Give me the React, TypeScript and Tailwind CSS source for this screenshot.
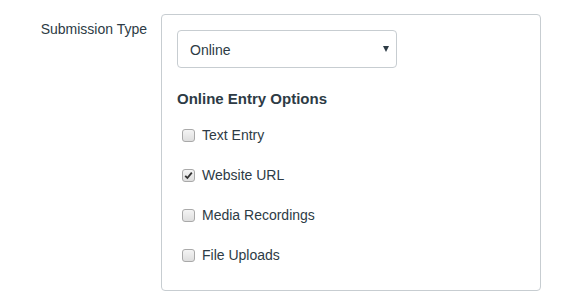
import React, { useState } from 'react';

const options = [
  { id: 'text', label: 'Text Entry' },
  { id: 'url', label: 'Website URL' },
  { id: 'media', label: 'Media Recordings' },
  { id: 'file', label: 'File Uploads' },
];

const Checkbox: React.FC<{ checked: boolean; onChange: () => void }> = ({ checked, onChange }) => (
  <span
    onClick={onChange}
    className="flex h-[13px] w-[13px] items-center justify-center rounded-[3px] border border-[#a9a9a9] bg-gradient-to-b from-[#f4f4f4] to-[#dedede]"
  >
    {checked && (
      <svg width="9" height="9" viewBox="0 0 9 9">
        <path d="M1.2 4.8 L3.4 7 L7.8 1.6" fill="none" stroke="#333" strokeWidth="1.8" />
      </svg>
    )}
  </span>
);

export default function App() {
  const [checked, setChecked] = useState<Record<string, boolean>>({ url: true });

  return (
    <div className="h-[305px] w-[578px] bg-white font-['Liberation_Sans',Arial,sans-serif] text-[#2d3b45]">
      <div className="flex pt-[14px]">
        {/* Label column */}
        <div className="w-[147px] pt-[5px] text-right text-[14px]">Submission Type</div>

        {/* Panel */}
        <div className="ml-[14px] h-[277px] w-[380px] rounded-[4px] border border-[#c7cdd1] px-[15px] pt-[15px]">
          <div className="relative flex h-[38px] w-[220px] items-center rounded-[4px] border border-[#c7cdd1] pl-[12px] pt-[3px] text-[14px]">
            Online
            <span className="absolute right-[7px] top-[15px] h-0 w-0 border-x-[3.5px] border-t-[6px] border-x-transparent border-t-[#2d3b45]" />
          </div>

          <div className="mt-[20px] text-[15px] font-bold">Online Entry Options</div>

          <div className="mt-[17px] flex flex-col gap-[24px]">
            {options.map(o => (
              <label key={o.id} className="flex h-[16px] items-center pl-[5px] text-[14px]">
                <Checkbox
                  checked={!!checked[o.id]}
                  onChange={() => setChecked(c => ({ ...c, [o.id]: !c[o.id] }))}
                />
                <span className="ml-[7px]">{o.label}</span>
              </label>
            ))}
          </div>
        </div>
      </div>
    </div>
  );
}
